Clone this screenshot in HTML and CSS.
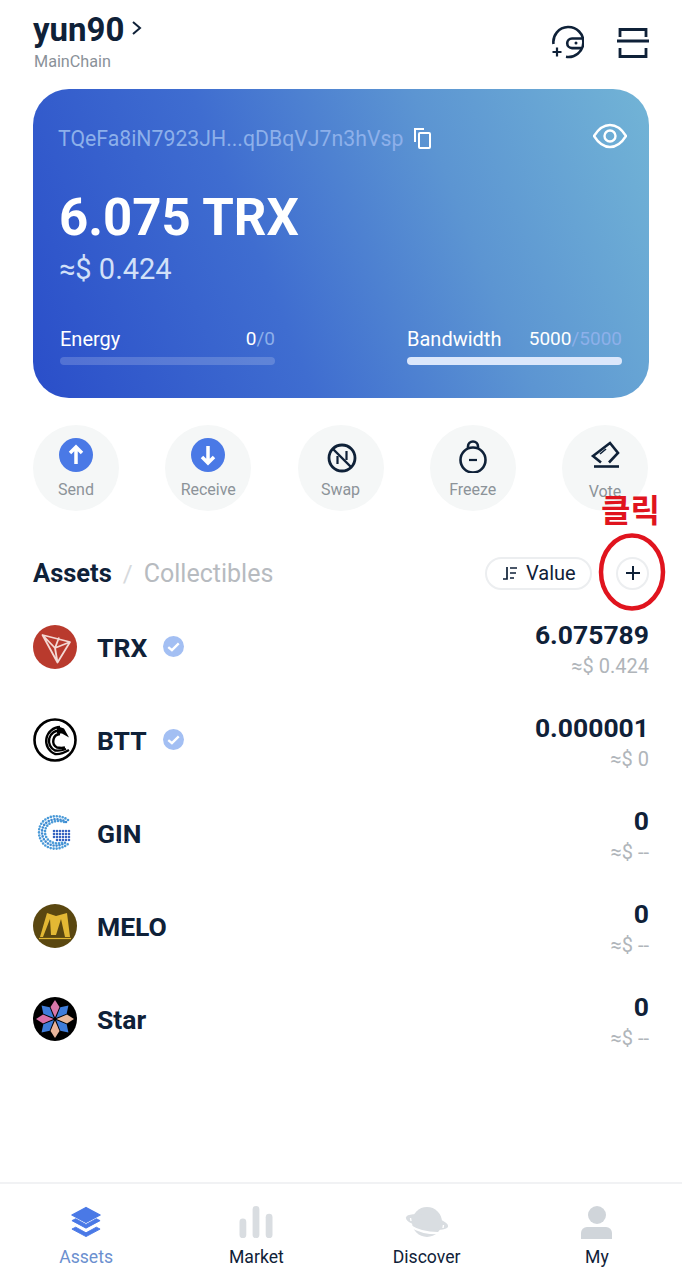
FILE: index.html
```html
<!DOCTYPE html>
<html lang="en">
<head>
<meta charset="utf-8">
<title>Wallet</title>
<link rel="stylesheet" href="styles.css">
</head>
<body>
<div class="page">
  <header class="top">
    <div class="account">
      <div class="name-row"><span class="name">yun90</span>
        <svg class="chev" width="12" height="16" viewBox="0 0 12 16"><path d="M2 2l7 6-7 6" fill="none" stroke="#0f2138" stroke-width="2"/></svg>
      </div>
      <div class="chain">MainChain</div>
    </div>
    <div class="top-icons">
      <svg width="32" height="34" viewBox="0 0 32 34" fill="none" stroke="#0f2138" stroke-width="2.600">
        <path d="M1.500 19A15 15 0 1 1 14 31.800"/>
        <path d="M30 13.500H20a4.800 4.800 0 0 0 0 9.600h9"/>
        <circle cx="24" cy="18" r="1.500" fill="#0f2138" stroke="none"/>
        <path d="M0.500 27h9M5 22.500v9" stroke-width="2.200"/>
      </svg>
      <svg class="scan" width="32" height="30" viewBox="0 0 32 30" fill="none" stroke="#0f2138" stroke-width="2.800">
        <path d="M3 9V1.500h26V9M0 13h32M3 20v8.500h26V20"/>
      </svg>
    </div>
  </header>

  <section class="card">
    <div class="addr-row">
      <span class="addr">TQeFa8iN7923JH...qDBqVJ7n3hVsp</span>
      <svg class="copy" width="17" height="21" viewBox="0 0 17 21" fill="none" stroke="#fff" stroke-width="2"><rect x="5" y="5" width="11" height="15" rx="1"/><path d="M1 14V1h9"/></svg>
      <svg class="eye" width="34" height="26" viewBox="0 0 34 26" fill="none" stroke="#fff" stroke-width="2.400"><path d="M1 13C6 5 11 2 17 2s11 3 16 11c-5 8-10 11-16 11S6 21 1 13z"/><circle cx="17" cy="13" r="5.500"/></svg>
    </div>
    <div class="amount">6.075 TRX</div>
    <div class="fiat">≈$ 0.424</div>
    <div class="meters">
      <div class="meter">
        <div class="meter-label"><span>Energy</span><span class="meter-val"><b>0</b><i>/0</i></span></div>
        <div class="bar"></div>
      </div>
      <div class="meter">
        <div class="meter-label"><span>Bandwidth</span><span class="meter-val"><b>5000</b><i>/5000</i></span></div>
        <div class="bar bar-full"></div>
      </div>
    </div>
  </section>

  <nav class="actions">
    <div class="action">
      <svg width="36" height="36" viewBox="0 0 36 36"><circle cx="18" cy="18" r="17" fill="#4a79e6"/><path d="M18 27V11M12 16l6-6 6 6" fill="none" stroke="#fff" stroke-width="3.500"/></svg>
      <span>Send</span>
    </div>
    <div class="action">
      <svg width="36" height="36" viewBox="0 0 36 36"><circle cx="18" cy="18" r="17" fill="#4a79e6"/><path d="M18 9v16M12 20l6 6 6-6" fill="none" stroke="#fff" stroke-width="3.500"/></svg>
      <span>Receive</span>
    </div>
    <div class="action">
      <svg width="36" height="36" viewBox="0 0 36 36" fill="none" stroke="#0f2138" stroke-width="2.800"><circle cx="19" cy="21" r="13"/><path d="M10 12l18 18" stroke-width="2.400"/><path d="M14.500 27V19M23.500 23V14" stroke-width="2.200"/></svg>
      <span>Swap</span>
    </div>
    <div class="action">
      <svg width="36" height="36" viewBox="0 0 36 36" fill="none" stroke="#0f2138" stroke-width="2.600"><circle cx="18" cy="23" r="12.500"/><path d="M13 12V9.500a5 5 0 0 1 10 0V12"/><path d="M14 23h8" stroke-width="2.200"/></svg>
      <span>Freeze</span>
    </div>
    <div class="action">
      <svg width="36" height="36" viewBox="0 0 36 36" fill="none" stroke="#0f2138" stroke-width="2.600"><path d="M14 25.500L6 19 23 6l8 10-9 9.500"/><path d="M13 17l6-5" stroke-width="1.600"/><path d="M7 29.500h25"/></svg>
      <span>Vote</span>
    </div>
  </nav>

  <div class="tabs">
    <div class="tab-left"><span class="tab-on">Assets</span><span class="slash">/</span><span class="tab-off">Collectibles</span></div>
    <div class="tab-right">
      <div class="sort">
        <svg width="16" height="14" viewBox="0 0 16 14" fill="none" stroke="#0f2138" stroke-width="1.700"><path d="M5 1v12H1M8 2h7M8 7h6M8 12h4"/></svg>
        <span>Value</span>
      </div>
      <div class="add"><svg width="16" height="16" viewBox="0 0 16 16" fill="none" stroke="#0f2138" stroke-width="2"><path d="M8 1v14M1 8h14"/></svg></div>
    </div>
  </div>

  <ul class="assets">
    <li class="asset">
      <svg class="logo" viewBox="0 0 44 44"><circle cx="22" cy="22" r="22" fill="#b93a2d"/><path d="M9.500 10L37 17 24.500 37.500zM9.500 10L22 23l15-6M22 23l2.500 14.500M26 12.500L22 23" fill="none" stroke="#f3d9d4" stroke-width="1.800" stroke-linejoin="round"/></svg>
      <span class="sym">TRX</span>
      <svg class="check" viewBox="0 0 20 20"><circle cx="10" cy="10" r="10" fill="#a3bff3"/><path d="M5 10.500l3.500 3L15 7" fill="none" stroke="#fff" stroke-width="2.200"/></svg>
      <div class="vals"><div class="qty">6.075789</div><div class="usd">≈$ 0.424</div></div>
    </li>
    <li class="asset">
      <svg class="logo" viewBox="0 0 44 44"><circle cx="22" cy="22" r="20.500" fill="#fff" stroke="#000" stroke-width="2.600"/><g fill="none" stroke="#000" stroke-width="2.400"><path d="M27 9A14 14 0 0 0 22 36c4 .5 8-.5 14-4"/><path d="M27 12.500A10.500 10.500 0 0 0 22 32.500c4 .5 7 0 11-1.500"/><path d="M27 16A7.200 7.200 0 0 0 24 29.500c3 .5 6 .5 8 0"/></g><path d="M24 8l7 2.500 5 9-7-4-5 0z" fill="#000"/></svg>
      <span class="sym">BTT</span>
      <svg class="check" viewBox="0 0 20 20"><circle cx="10" cy="10" r="10" fill="#a3bff3"/><path d="M5 10.500l3.500 3L15 7" fill="none" stroke="#fff" stroke-width="2.200"/></svg>
      <div class="vals"><div class="qty">0.000001</div><div class="usd">≈$ 0</div></div>
    </li>
    <li class="asset">
      <svg class="logo" viewBox="0 0 44 44" fill="none" stroke-linecap="round" stroke-dasharray="0 3" stroke-width="2.600">
        <path d="M35 9C24 1 6 6 6 21s16 22 29 12" stroke="#4a9ad8"/>
        <path d="M33 11C24 5 9 9 9 21s13 18 24 10" stroke="#3f8ad0"/>
        <path d="M31 11C23 8 12 12 12 21s10 14 19 10" stroke="#4a9ad8"/>
        <path d="M21 20h18M21 23h18M21 26h18M24 29h14" stroke="#3563c0"/>
      </svg>
      <span class="sym">GIN</span>
      <div class="vals"><div class="qty">0</div><div class="usd">≈$ --</div></div>
    </li>
    <li class="asset">
      <svg class="logo" viewBox="0 0 44 44"><circle cx="22" cy="22" r="22" fill="#5a4710"/><path d="M7 33L14 9l9 3 11-3 3 24h-5l-4-18-5 16h-5l-1-16-7 18z" fill="#e3b834"/><path d="M6 34.500h32" stroke="#e3b834" stroke-width="1.200"/></svg>
      <span class="sym">MELO</span>
      <div class="vals"><div class="qty">0</div><div class="usd">≈$ --</div></div>
    </li>
    <li class="asset">
      <svg class="logo" viewBox="0 0 44 44"><circle cx="22" cy="22" r="22" fill="#000"/>
        <path d="M22 20.500L17.500 10 22 3l4.500 7z" fill="#d878a8"/>
        <path d="M22 20.500L17.500 10 22 3l4.500 7z" fill="#3f7ddb" transform="rotate(45 22 22)"/>
        <path d="M22 20.500L17.500 10 22 3l4.500 7z" fill="#e8b79a" transform="rotate(90 22 22)"/>
        <path d="M22 20.500L17.500 10 22 3l4.500 7z" fill="#3f7ddb" transform="rotate(135 22 22)"/>
        <path d="M22 20.500L17.500 10 22 3l4.500 7z" fill="#eab59a" transform="rotate(180 22 22)"/>
        <path d="M22 20.500L17.500 10 22 3l4.500 7z" fill="#3f7ddb" transform="rotate(225 22 22)"/>
        <path d="M22 20.500L17.500 10 22 3l4.500 7z" fill="#d870a8" transform="rotate(270 22 22)"/>
        <path d="M22 20.500L17.500 10 22 3l4.500 7z" fill="#3f7ddb" transform="rotate(315 22 22)"/>
      </svg>
      <span class="sym">Star</span>
      <div class="vals"><div class="qty">0</div><div class="usd">≈$ --</div></div>
    </li>
  </ul>

  <footer class="tabbar">
    <div class="tb-item tb-active">
      <svg width="30" height="33" viewBox="0 0 32 34" fill="#4a79e6"><path d="M16 1l15 8-15 8L1 9z" stroke="#4a79e6" stroke-width="1.500" stroke-linejoin="round"/><path d="M1 15l4-2 11 6 11-6 4 2-15 8zM1 24l4-2 11 6 11-6 4 2-15 8z" stroke="#4a79e6" stroke-linejoin="round"/></svg>
      <span>Assets</span>
    </div>
    <div class="tb-item">
      <svg width="34" height="33" viewBox="0 0 34 34" fill="#d9dde1"><rect x="0" y="13" width="7" height="20" rx="3.500"/><rect x="13.500" y="0" width="7" height="33" rx="3.500"/><rect x="27" y="8" width="7" height="25" rx="3.500"/></svg>
      <span>Market</span>
    </div>
    <div class="tb-item">
      <svg width="44" height="33" viewBox="0 0 44 33" fill="#d9dde1"><circle cx="22" cy="16" r="15"/><ellipse cx="22" cy="16" rx="21.500" ry="6.500" transform="rotate(12 22 16)"/><path d="M5 20c8 5 20 8 33 7" fill="none" stroke="#fff" stroke-width="2.200"/><path d="M5.500 12l.5 3M38.500 19l-.5 3" stroke="#fff" stroke-width="1.400"/></svg>
      <span>Discover</span>
    </div>
    <div class="tb-item">
      <svg width="32" height="33" viewBox="0 0 32 33" fill="#d0d5da"><circle cx="16" cy="9" r="9"/><path d="M0 33V27a6 6 0 0 1 6-6h19a6 6 0 0 1 6 6v6z"/></svg>
      <span>My</span>
    </div>
  </footer>

  <div class="note">클릭</div>
  <svg class="ring" width="70" height="80" viewBox="0 0 70 80"><ellipse cx="34" cy="39" rx="31" ry="36.500" fill="none" stroke="#e0141e" stroke-width="4.500"/></svg>
</div>
</body>
</html>
```
FILE: styles.css
```css
* { box-sizing: border-box; }
html, body { margin: 0; padding: 0; background: #fff; }
body { font-family: Roboto, "Noto Sans CJK KR", sans-serif; color: #0f2138; }
.page { position: relative; width: 682px; height: 1281px; display: flex; flex-direction: column; padding: 0 33px; overflow: hidden; }

.top { display: flex; justify-content: space-between; align-items: flex-start; padding-top: 10px; height: 89px; flex: none; }
.name-row { display: flex; align-items: flex-start; gap: 7px; height: 40px; }
.name { font-size: 33px; font-weight: 700; line-height: 39px; }
.chev { margin-top: 10px; }
.chain { font-size: 16.2px; line-height: 20px; color: #8a9199; margin-top: 2px; margin-left: 1px; }
.top-icons { display: flex; align-items: flex-start; gap: 33px; margin-top: 15px; }
.scan { margin-top: 3px; }

.card { height: 309px; flex: none; border-radius: 36px; padding: 34px 27px 0 25px; color: #fff; background: linear-gradient(68deg, #2a4ec9 0%, #3f6dd0 38%, #5c95d2 68%, #72b4d6 100%); display: flex; flex-direction: column; }
.addr-row { display: flex; align-items: center; height: 30px; }
.addr { font-size: 21.25px; color: #8db0ea; }
.copy { margin-left: 11px; }
.eye { margin-left: auto; margin-right: -5px; margin-top: -5px; }
.amount { font-size: 51px; font-weight: 700; line-height: 60px; margin-top: 35px; margin-left: 1px; }
.fiat { font-size: 29px; line-height: 36px; color: #d2e0f8; margin-top: 3px; margin-left: 1px; }
.meters { display: flex; justify-content: space-between; margin-top: 39px; margin-left: 2px; }
.meter { width: 215px; }
.meter-label { display: flex; justify-content: space-between; align-items: center; font-size: 20px; line-height: 26px; height: 26px; }
.meter-val { font-size: 19px; }
.meter-val b { font-weight: 400; }
.meter-val i { font-style: normal; color: #8db0ea; }
.bar { height: 8px; border-radius: 4px; margin-top: 5px; background: rgba(255,255,255,.18); }
.bar-full { background: #dbe7fb; }

.actions { display: flex; justify-content: space-between; margin: 27px 1px 0 0; flex: none; }
.action { width: 86px; height: 86px; border-radius: 50%; background: #f5f7f7; display: flex; flex-direction: column; align-items: center; padding-top: 12px; }
.action svg { display: block; }
.action span { font-size: 16px; line-height: 20px; color: #8c9399; margin-top: 7px; }
.action:last-child span { margin-top: 9px; }

.tabs { display: flex; justify-content: space-between; align-items: center; margin-top: 42px; height: 40px; flex: none; }
.tab-left { display: flex; align-items: baseline; }
.tab-on { font-size: 25.5px; font-weight: 700; }
.slash { font-size: 24px; color: #d6d9dc; margin: 0 11px; }
.tab-off { font-size: 25px; color: #b7bbc0; }
.tab-right { display: flex; align-items: center; gap: 24px; }
.sort { display: flex; align-items: center; gap: 8px; width: 107px; height: 33px; border: 2px solid #eceef0; border-radius: 17px; padding-left: 15px; font-size: 20px; }
.add { width: 33px; height: 33px; border: 2px solid #eceef0; border-radius: 50%; display: flex; align-items: center; justify-content: center; }

.assets { list-style: none; margin: 8px 0 0; padding: 0; flex: none; }
.asset { display: flex; align-items: center; height: 93px; }
.logo { width: 44px; height: 44px; flex: none; margin-bottom: 2px; }
.sym { font-size: 26.5px; font-weight: 700; margin-left: 20px; }
.check { width: 21px; height: 21px; margin-left: 16px; margin-top: -2px; }
.vals { margin-left: auto; text-align: right; padding-top: 2px; }
.qty { font-size: 26.5px; font-weight: 700; line-height: 32px; }
.usd { font-size: 20px; line-height: 26px; color: #b0b5ba; margin-top: 2px; }

.tabbar { margin: auto -33px 0; height: 99px; flex: none; border-top: 2px solid #f1f2f4; display: flex; padding: 22px 0 0 1px; }
.tb-item { flex: 1; display: flex; flex-direction: column; align-items: center; }
.tb-item span { font-size: 17.6px; line-height: 24px; margin-top: 6px; }
.tb-active span { color: #6b8fcf; }

.note { position: absolute; left: 601px; top: 486px; font-family: "Noto Sans CJK KR", sans-serif; font-weight: 700; font-size: 32px; line-height: 44px; color: #e0141e; }
.ring { position: absolute; left: 598px; top: 533px; }
```
